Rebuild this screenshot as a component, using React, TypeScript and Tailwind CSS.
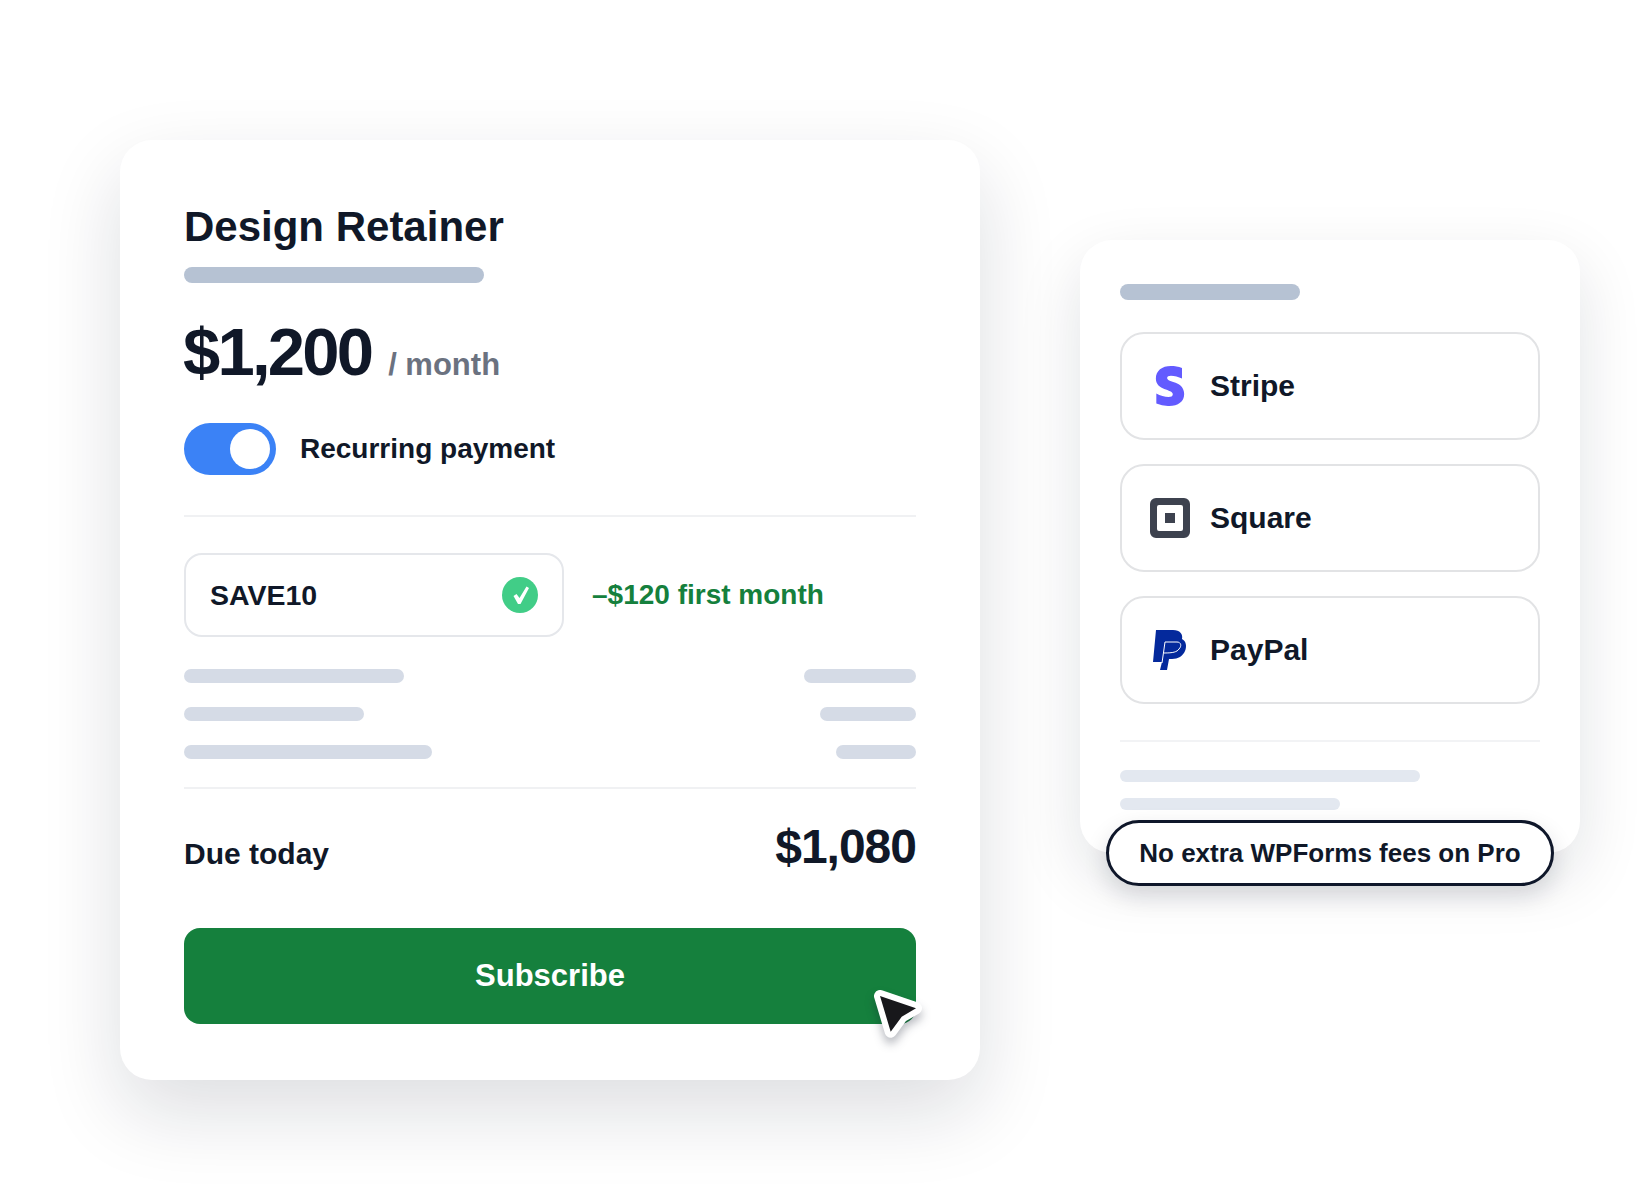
import { FaStripeS } from 'react-icons/fa';

const font = { fontFamily: '"Liberation Sans", Arial, sans-serif' };

function SkeletonRow({ left, right }: { left: string; right: string }) {
  return (
    <div className="flex justify-between">
      <div className={`h-[14px] rounded-full bg-[#d5dbe6] ${left}`} />
      <div className={`h-[14px] rounded-full bg-[#d5dbe6] ${right}`} />
    </div>
  );
}

function Gateway({ icon, name }: { icon: React.ReactNode; name: string }) {
  return (
    <div className="flex h-[108px] items-center rounded-[24px] border-2 border-[#e2e3e5] pl-[26px]">
      <div className="flex w-[44px] justify-center">{icon}</div>
      <span className="mb-[2px] ml-[18px] text-[30px] font-bold text-[#101828]">{name}</span>
    </div>
  );
}

function SquareLogo() {
  return (
    <svg width="40" height="40" viewBox="0 0 40 40">
      <path
        fillRule="evenodd"
        fill="#3d424f"
        d="M6 0h28a6 6 0 0 1 6 6v28a6 6 0 0 1-6 6H6a6 6 0 0 1-6-6V6a6 6 0 0 1 6-6Zm3 7a2 2 0 0 0-2 2v22a2 2 0 0 0 2 2h22a2 2 0 0 0 2-2V9a2 2 0 0 0-2-2H9Zm6 8h10v10H15V15Z"
      />
    </svg>
  );
}

function PaypalLogo() {
  return (
    <svg width="34" height="40" viewBox="0 0 34 40">
      <path
        fill="#04299c"
        d="M3 0H20C27 0 30 4 29 9C33 11 34 16 32 21C30 26 25 29 19 29H16L14 40H7L9 32H0Z"
      />
      <path
        fill="none"
        stroke="#ffffff"
        strokeWidth="1"
        d="M9 33L12 12H24C28 12 29 16 26 19C24 22 20 23 11 23"
      />
    </svg>
  );
}

function Cursor() {
  const d = 'M10 8 L46 20.3 L31.7 28.7 L20.7 43.7 Z';
  return (
    <svg width="60" height="60" viewBox="0 0 60 60" className="overflow-visible drop-shadow-[0_6px_5px_rgba(15,23,42,0.3)]">
      <path d={d} fill="#ffffff" stroke="#ffffff" strokeWidth="12" strokeLinejoin="round" />
      <path d={d} fill="#18181b" />
    </svg>
  );
}

export default function App() {
  return (
    <div style={font} className="flex min-h-[1200px] items-start gap-[100px] bg-white pl-[120px] pt-[140px]">
      {/* Checkout card */}
      <div className="relative h-[940px] w-[860px] rounded-[32px] bg-white px-[64px] pt-[63px] shadow-[0_32px_80px_rgba(15,23,42,0.14)]">
        <h1 className="text-[42px] font-bold leading-[48px] text-[#101828]">Design Retainer</h1>
        <div className="mt-[16px] h-4 w-[300px] rounded-full bg-[#b6c2d3]" />

        <div className="mt-[33px] flex h-[72px] items-baseline">
          <span className="-ml-[1px] text-[67px] font-bold leading-[72px] tracking-[-2.8px] text-[#101828]">$1,200</span>
          <span className="ml-[17px] text-[31px] font-bold text-[#6b7280]">/ month</span>
        </div>

        <div className="mt-[35px] flex items-center">
          <div className="relative h-[52px] w-[92px] rounded-full bg-[#3b82f6]">
            <div className="absolute right-[6px] top-[6px] size-10 rounded-full bg-white" />
          </div>
          <span className="ml-[24px] text-[28px] font-bold text-[#101828]">Recurring payment</span>
        </div>

        <div className="mt-[40px] h-[2px] bg-[#f0f1f3]" />

        <div className="mt-[36px] flex items-center">
          <div className="flex h-[84px] w-[380px] items-center justify-between rounded-[18px] border-2 border-[#e5e7eb] px-[24px]">
            <span className="text-[28.5px] font-bold text-[#101828]">SAVE10</span>
            <div className="flex size-9 items-center justify-center rounded-full bg-[#41cd87]">
              <svg width="36" height="36" viewBox="0 0 36 36">
                <path d="M11.5 19L14.5 17L17.5 21L24.5 9.5L27 11L18.5 27L16 27Z" fill="#ffffff" />
              </svg>
            </div>
          </div>
          <span className="ml-[28px] text-[28px] font-bold text-[#15803d]">–$120 first month</span>
        </div>

        <div className="mt-[32px] flex flex-col gap-6">
          <SkeletonRow left="w-[220px]" right="w-[112px]" />
          <SkeletonRow left="w-[180px]" right="w-[96px]" />
          <SkeletonRow left="w-[248px]" right="w-[80px]" />
        </div>

        <div className="mt-[28px] h-[2px] bg-[#f0f1f3]" />

        <div className="mt-[28px] flex h-[56px] items-center justify-between">
          <span className="mt-[16px] text-[30px] font-bold text-[#101828]">Due today</span>
          <span className="mt-[4px] text-[48px] font-bold leading-[56px] tracking-[-1px] text-[#101828]">$1,080</span>
        </div>

        <div className="mt-[55px] flex h-[96px] items-center justify-center rounded-[16px] bg-[#15803d] text-[31px] font-bold text-white">
          Subscribe
        </div>

        <div className="absolute left-[750px] top-[848px]">
          <Cursor />
        </div>
      </div>

      {/* Gateways card */}
      <div className="relative mt-[100px] h-[613px] w-[500px] rounded-[32px] bg-white px-[40px] pt-[44px] shadow-[0_24px_64px_rgba(15,23,42,0.12)]">
        <div className="h-4 w-[180px] rounded-full bg-[#b6c2d3]" />
        <div className="mt-[32px] flex flex-col gap-6">
          <Gateway icon={<FaStripeS size={40} color="#635bff" />} name="Stripe" />
          <Gateway icon={<SquareLogo />} name="Square" />
          <Gateway icon={<PaypalLogo />} name="PayPal" />
        </div>
        <div className="mt-[36px] h-[2px] bg-[#f2f3f5]" />
        <div className="mt-[28px] h-3 w-[300px] rounded-full bg-[#e3e8f0]" />
        <div className="mt-4 h-3 w-[220px] rounded-full bg-[#e3e8f0]" />

        <div className="absolute left-[26px] top-[580px] flex h-[66px] w-[448px] items-center justify-center rounded-full border-[3px] border-[#0f172a] bg-white text-[26px] font-bold text-[#101828] shadow-[0_10px_24px_rgba(15,23,42,0.14)]">
          No extra WPForms fees on Pro
        </div>
      </div>
    </div>
  );
}
